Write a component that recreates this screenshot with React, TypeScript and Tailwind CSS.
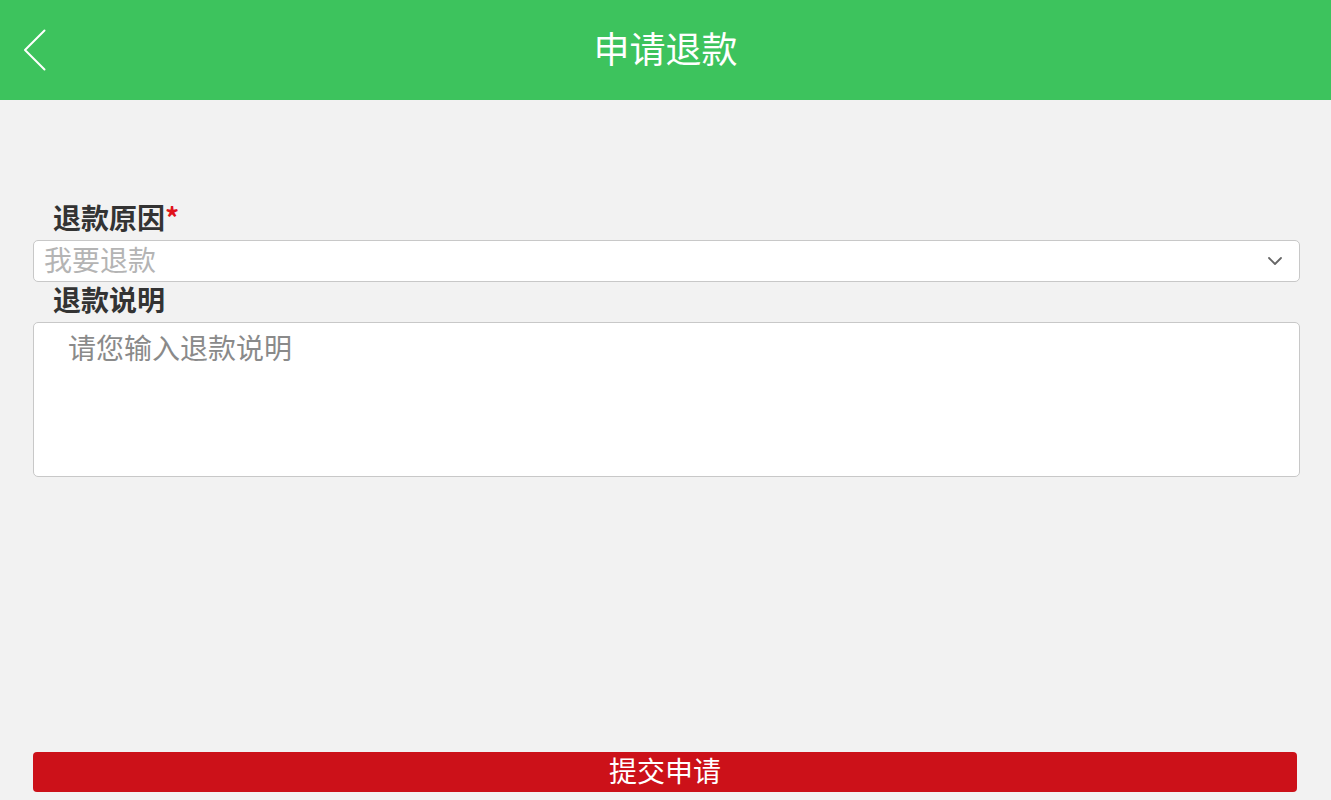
import React from "react";

export default function App() {
  const font = { fontFamily: '"Noto Sans CJK SC", "Noto Sans", sans-serif' };
  return (
    <div style={font} className="min-h-[800px] w-full bg-[#f2f2f2] flex flex-col">
      <header className="relative h-[100px] bg-[#3dc35d] flex items-center justify-center shrink-0 pb-[6px]">
        <div className="absolute left-[22px] top-[29px] w-[26px] h-[42px]">
          <svg width="26" height="42" viewBox="0 0 26 42" fill="none">
            <path d="M22.5 1.5 L3 21 L22.5 40.5" stroke="#ffffff" strokeWidth="2" strokeLinecap="round" strokeLinejoin="round" />
          </svg>
        </div>
        <h1 className="text-white text-[36px] leading-none font-normal">申请退款</h1>
      </header>

      <div className="px-[33px] pr-[31px] mt-[99px] flex flex-col">
        <div className="pl-[20px] h-[41px] pb-[6px] flex items-center text-[28px] font-bold text-[#333333] leading-none">
          退款原因<span className="text-[#e0121b]">*</span>
        </div>
        <div className="h-[42px] bg-white border border-[#c8c8c8] rounded-[5px] flex items-center justify-between pl-[10px] pr-[16px]">
          <span className="text-[28px] leading-none text-[#b4b4b4] pb-[4px]">我要退款</span>
          <svg width="16" height="10" viewBox="0 0 16 10" fill="none">
            <path d="M2 2 L8 8 L14 2" stroke="#666666" strokeWidth="1.8" strokeLinecap="round" strokeLinejoin="round" />
          </svg>
        </div>
        <div className="pl-[20px] h-[40px] pb-[6px] flex items-center text-[28px] font-bold text-[#333333] leading-none">
          退款说明
        </div>
        <div className="h-[155px] bg-white border border-[#c8c8c8] rounded-[5px] pl-[34px] pt-[7px]">
          <span className="text-[28px] leading-[34px] text-[#8a8a8a]">请您输入退款说明</span>
        </div>
      </div>

      <button className="mt-auto mb-[8px] ml-[33px] mr-[34px] h-[40px] bg-[#cc1119] rounded-[4px] text-white text-[28px] leading-none flex items-center justify-center pb-[5px]">
        提交申请
      </button>
    </div>
  );
}
